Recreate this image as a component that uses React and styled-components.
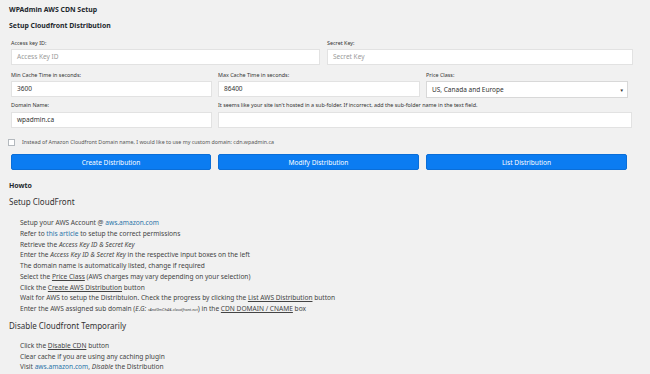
import React from 'react'
import styled, { createGlobalStyle } from 'styled-components'

const GlobalStyle = createGlobalStyle`
body {
  margin: 0;
  background: #f1f1f1;
  font-family: "Noto Sans", "Open Sans", sans-serif;
  color: #444;
}
`

const Page = styled.div`
  padding: 4px 9px 0 9px;
`

const Title = styled.h1`
  margin: 0;
  font-size: 6.9px;
  font-weight: 700;
  color: #23282d;
  line-height: 12px;
`

const SubTitle = styled.h2`
  margin: 4px 0 0;
  font-size: 6.9px;
  font-weight: 700;
  color: #23282d;
  line-height: 12px;
`

const Form = styled.div`
  padding-left: 2px;
  margin-top: 7px;
`

const Row = styled.div`
  display: grid;
  grid-template-columns: ${props => props.cols};
  column-gap: ${props => props.colGap || 6}px;
  width: 622px;
  margin-top: ${props => props.top || 0}px;
  margin-bottom: ${props => props.gap || 0}px;
`

const Field = styled.div`
  display: flex;
  flex-direction: column;
`

const Label = styled.label`
  font-size: 5.4px;
  color: #333;
  line-height: 8px;
  height: 8px;
  margin-bottom: ${props => props.space || 2}px;
  white-space: nowrap;
`

const Input = styled.div`
  height: 16px;
  box-sizing: border-box;
  background: #fff;
  border: 1px solid #e2e2e2;
  font-size: 6.5px;
  line-height: 14px;
  padding: 0 5px;
  color: ${props => props.placeholder ? '#9a9a9a' : '#333'};
`

const Select = styled(Input)`
  display: flex;
  justify-content: space-between;
  align-items: center;
  height: 17px;
  border-color: #d8d8d8;
  padding-right: 3px;
`

const Arrow = styled.span`
  font-size: 4.5px;
  color: #333;
`

const CheckRow = styled.div`
  display: flex;
  align-items: center;
  gap: 7px;
  height: 8px;
  margin: 10px 0 0 -3px;
`

const Box = styled.span`
  width: 7px;
  height: 7px;
  box-sizing: border-box;
  border: 1px solid #b4b9be;
  background: #fff;
`

const CheckText = styled.span`
  font-size: 5.3px;
  color: #555;
`

const Button = styled.div`
  height: 16px;
  box-sizing: border-box;
  background: #0b7cf1;
  border: 1px solid #0a6ed8;
  border-radius: 2px;
  color: #fff;
  font-size: 6.6px;
  display: flex;
  align-items: center;
  justify-content: center;
`

const Heading = styled.h3`
  margin: 10px 0 0;
  font-size: 7px;
  font-weight: 700;
  color: #23282d;
  line-height: 12px;
`

const Section = styled.h4`
  margin: ${props => props.top}px 0 0;
  font-size: 8px;
  font-weight: 400;
  color: #333;
  line-height: 14px;
`

const List = styled.ul`
  list-style: none;
  margin: ${props => props.top}px 0 0;
  padding: 0 0 0 11px;
`

const Item = styled.li`
  font-size: 6.6px;
  line-height: 10.75px;
  color: #444;
  white-space: nowrap;
`

const Link = styled.a`
  color: #2a73a8;
  text-decoration: none;
`

const U = styled.span`
  text-decoration: underline;
`

const Tiny = styled.span`
  font-size: 4px;
  font-style: italic;
`

export default function App() {
  return (
    <>
      <GlobalStyle />
      <Page>
        <Title>WPAdmin AWS CDN Setup</Title>
        <SubTitle>Setup Cloudfront Distribution</SubTitle>
        <Form>
          <Row cols="309px 306px" colGap={7} gap={6}>
            <Field>
              <Label>Access key ID:</Label>
              <Input placeholder="1">Access Key ID</Input>
            </Field>
            <Field>
              <Label>Secret Key:</Label>
              <Input placeholder="1">Secret Key</Input>
            </Field>
          </Row>
          <Row cols="201px 202px 202px" gap={3}>
            <Field>
              <Label>Min Cache Time in seconds:</Label>
              <Input>3600</Input>
            </Field>
            <Field>
              <Label>Max Cache Time in seconds:</Label>
              <Input>86400</Input>
            </Field>
            <Field>
              <Label>Price Class:</Label>
              <Select>US, Canada and Europe<Arrow>▼</Arrow></Select>
            </Field>
          </Row>
          <Row cols="201px 414px">
            <Field>
              <Label space={3}>Domain Name:</Label>
              <Input>wpadmin.ca</Input>
            </Field>
            <Field>
              <Label space={3}>It seems like your site isn't hosted in a sub-folder. If incorrect, add the sub-folder name in the text field.</Label>
              <Input />
            </Field>
          </Row>
          <CheckRow>
            <Box />
            <CheckText>Instead of Amazon Cloudfront Domain name, I would like to use my custom domain: cdn.wpadmin.ca</CheckText>
          </CheckRow>
          <Row cols="200px 201px 201px" colGap={7} top={8}>
            <Button>Create Distribution</Button>
            <Button>Modify Distribution</Button>
            <Button>List Distribution</Button>
          </Row>
        </Form>
        <Heading>Howto</Heading>
        <Section top={3}>Setup CloudFront</Section>
        <List top={9}>
          <Item>Setup your AWS Account @ <Link>aws.amazon.com</Link></Item>
          <Item>Refer to <Link>this article</Link> to setup the correct permissions</Item>
          <Item>Retrieve the <i>Access Key ID &amp; Secret Key</i></Item>
          <Item>Enter the <i>Access Key ID &amp; Secret Key</i> in the respective input boxes on the left</Item>
          <Item>The domain name is automatically listed, change if required</Item>
          <Item>Select the <U>Price Class</U> (AWS charges may vary depending on your selection)</Item>
          <Item>Click the <U>Create AWS Distribution</U> button</Item>
          <Item>Wait for AWS to setup the Distribtuion. Check the progress by clicking the <U>List AWS Distribution</U> button</Item>
          <Item>Enter the AWS assigned sub domain (<i>E.G:</i> <Tiny>rAnd0mCh4&amp;.cloudfront.net</Tiny>) in the <U>CDN DOMAIN / CNAME</U> box</Item>
        </List>
        <Section top={3}>Disable Cloudfront Temporarily</Section>
        <List top={8}>
          <Item>Click the <U>Disable CDN</U> button</Item>
          <Item>Clear cache if you are using any caching plugin</Item>
          <Item>Visit <Link>aws.amazon.com</Link>, <i>Disable</i> the Distribution</Item>
        </List>
      </Page>
    </>
  )
}
